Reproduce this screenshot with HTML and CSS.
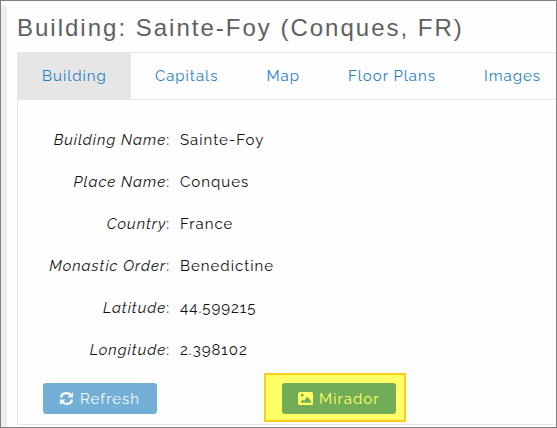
FILE: index.html
```html
<!DOCTYPE html>
<html lang="en">
<head>
    <meta charset="UTF-8">
    <meta name="viewport" content="width=device-width, initial-scale=1.0">
    <title>Building: Sainte-Foy (Conques, FR)</title>
    <link rel="stylesheet" href="styles.css">
</head>
<body>
    <div class="page">
        <div class="side-strip"></div>
        <main>
            <h1>Building: Sainte-Foy (Conques, FR)</h1>
            <nav class="tabs">
                <a class="active" href="#building">Building</a>
                <a href="#capitals">Capitals</a>
                <a href="#map">Map</a>
                <a href="#floor-plans">Floor Plans</a>
                <a href="#images">Images</a>
            </nav>
            <section class="panel" id="building">
                <dl class="details">
                    <dt><em>Building Name</em>:</dt>
                    <dd>Sainte-Foy</dd>
                    <dt><em>Place Name</em>:</dt>
                    <dd>Conques</dd>
                    <dt><em>Country</em>:</dt>
                    <dd>France</dd>
                    <dt><em>Monastic Order</em>:</dt>
                    <dd>Benedictine</dd>
                    <dt><em>Latitude</em>:</dt>
                    <dd>44.599215</dd>
                    <dt><em>Longitude</em>:</dt>
                    <dd>2.398102</dd>
                </dl>
                <div class="actions">
                    <button class="btn refresh" type="button">
                        <svg class="icon" viewBox="0 0 16 16" fill="none" stroke="currentColor" stroke-width="2.4">
                            <path d="M2 7C2.600 4 5 2.200 8 2.200c2 0 3.600.8 4.800 2.200M14 9c-.6 3-3 4.800-6 4.800-2 0-3.600-.8-4.800-2.200"/>
                            <path d="M15 1v6H9zM1 15V9h6z" fill="currentColor" stroke="none"/>
                        </svg>
                        Refresh
                    </button>
                    <div class="highlight">
                        <button class="btn mirador" type="button">
                            <svg class="icon" viewBox="0 0 16 16" fill="currentColor">
                                <path fill-rule="evenodd" d="M2 1h12a2 2 0 0 1 2 2v10a2 2 0 0 1-2 2H2a2 2 0 0 1-2-2V3a2 2 0 0 1 2-2zM4.500 3a1.500 1.500 0 1 0 0 3 1.500 1.500 0 0 0 0-3zM3 12.500h11V11l-4-5-3.500 4.500L5 9l-2 2.500z"/>
                            </svg>
                            Mirador
                        </button>
                    </div>
                </div>
            </section>
        </main>
    </div>
</body>
</html>
```
FILE: styles.css
```css
* {
    box-sizing: border-box;
}
body {
    margin: 0;
    background-color: #fefefe;
    color: #111;
    font-family: Raleway, Lato, sans-serif;
    font-size: 15px;
    line-height: 18px;
    letter-spacing: 1px;
}
.page {
    display: flex;
    min-height: 100vh;
    border: 1px solid #808080;
    overflow: hidden;
}
.side-strip {
    flex: none;
    width: 6px;
    margin-top: 4px;
    background-color: #eee;
    border-top-right-radius: 4px;
}
main {
    flex: 1;
    min-width: 0;
    padding: 11px 0 2px 10px;
}
h1 {
    margin: 0 0 8px;
    color: #606060;
    font-family: Arial, "Liberation Sans", sans-serif;
    font-size: 24px;
    font-weight: normal;
    line-height: 32px;
    letter-spacing: 2px;
    white-space: nowrap;
}
.tabs {
    display: flex;
    border: 1px solid #e6e6e6;
    border-right: none;
}
.tabs a {
    padding: 14px 24px;
    color: #2780c2;
    text-decoration: none;
    white-space: nowrap;
}
.tabs a.active {
    background-color: #e6e6e6;
}
.panel {
    padding: 19px 24px 2px 25px;
    border: 1px solid #e6e6e6;
    border-top: none;
    border-right: none;
}
.details {
    display: grid;
    grid-template-columns: 127px 1fr;
    column-gap: 10px;
    margin: 0 0 2px;
    line-height: 42px;
    font-variant-numeric: oldstyle-nums;
}
.details dt {
    text-align: right;
    white-space: nowrap;
}
.details dd {
    margin: 0;
}
.actions {
    display: flex;
    align-items: baseline;
}
.btn {
    display: flex;
    align-items: center;
    gap: 6px;
    height: 31px;
    padding: 0 17px 0 16px;
    border: none;
    border-radius: 3px;
    font: inherit;
    letter-spacing: 1px;
    cursor: pointer;
}
.refresh {
    background-color: #73aed6;
    color: #f6fafd;
}
.mirador {
    background-color: #73ac57;
    color: #ffff66;
}
.highlight {
    margin-left: 107px;
    padding: 8px 8px 6px 16px;
    background-color: #ffff66;
    border: 2px solid #ffcc1a;
}
.icon {
    width: 15px;
    height: 15px;
}
```
